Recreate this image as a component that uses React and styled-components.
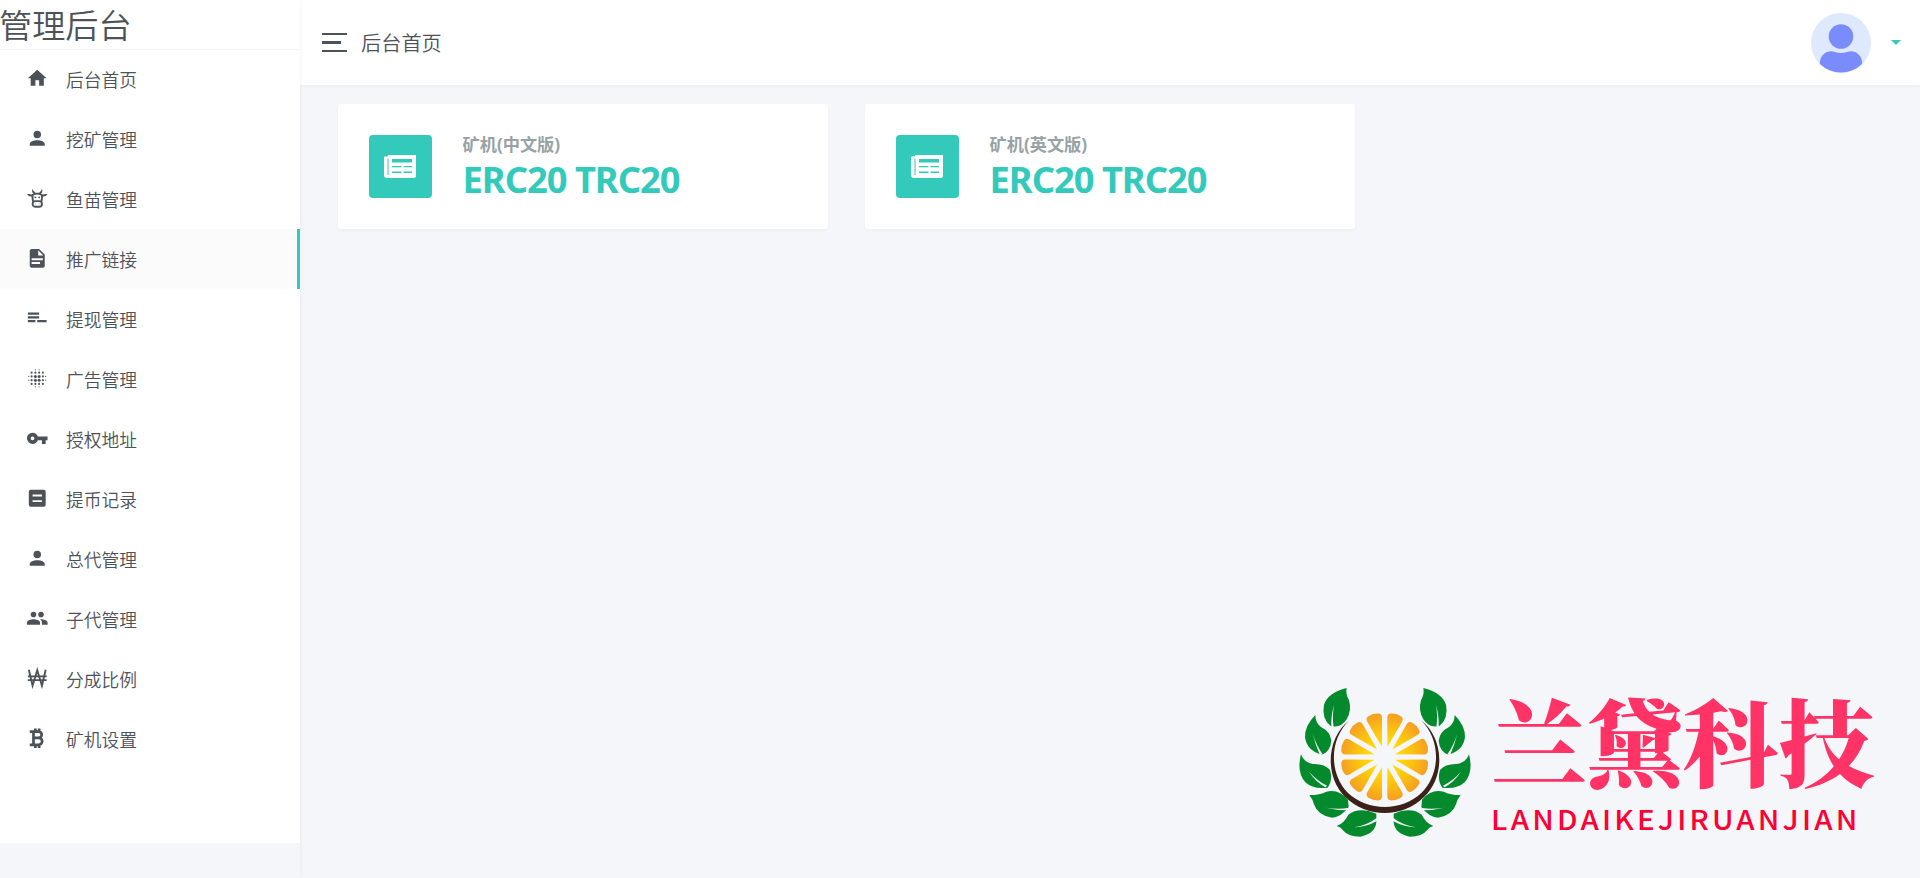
import React from 'react';
import styled, { createGlobalStyle } from 'styled-components';

const Global = createGlobalStyle`
  * { box-sizing: border-box; }
  body { margin: 0; background: #f4f6fa; color: #4d5259; overflow: hidden;
    font-family: "Noto Sans", "Noto Sans CJK SC", sans-serif; font-weight: 300; }
`;
const Shell = styled.div`display: flex; height: 878px;`;
const Sidebar = styled.aside`width: 300px; flex: none; box-shadow: 0 0 5px rgba(0,0,0,.06); z-index: 2;`;
const SideBody = styled.div`height: 843px; background: #fff;`;
const Brand = styled.div`
  height: 50px; margin-bottom: -1px; border-bottom: 1px solid #f5f5f5; white-space: nowrap;
  font: 350 33.2px/48px "Noto Sans CJK SC", sans-serif; margin-left: -1px;
`;
const Nav = styled.nav`display: flex; flex-direction: column;`;
const NavItem = styled.a`
  height: 60px; padding-left: 26px; display: flex; align-items: center; gap: 17.5px; flex: none;
  background: ${p => (p.$active ? '#fbfbfb' : 'transparent')};
  border-right: 3px solid ${p => (p.$active ? '#33cabb' : 'transparent')};
`;
const NavIcon = styled.svg`width: 22.5px; height: 22.5px; fill: currentColor; flex: none; margin-top: -1px;`;
const NavLabel = styled.span`font: 350 17.75px/26px "Noto Sans CJK SC", sans-serif;`;
const Main = styled.main`flex: 1; display: flex; flex-direction: column;`;
const Topbar = styled.header`
  height: 85px; background: #fff; box-shadow: 0 1px 3px rgba(0,0,0,.04);
  display: flex; align-items: center; padding: 0 19px 0 22px;
`;
const Burger = styled.div`
  width: 25px; height: 19px; display: flex; flex-direction: column; justify-content: space-between; margin-right: 14px;
`;
const Bar = styled.span`height: ${p => (p.$short ? 3 : 2)}px; width: ${p => (p.$short ? 19 : 25)}px; background: #4d5259;`;
const PageTitle = styled.div`flex: 1; font: 350 20.2px/30px "Noto Sans CJK SC", sans-serif;`;
const Avatar = styled.svg`width: 60px; height: 60px; margin-right: 20px;`;
const Caret = styled.span`border: 5px solid transparent; border-top-color: #33cabb; border-bottom: 0;`;
const Content = styled.div`flex: 1; display: flex; flex-direction: column; justify-content: space-between; padding: 19px 44px 39px 38px;`;
const Cards = styled.div`display: flex; gap: 37px;`;
const Card = styled.section`
  width: 490px; height: 125px; background: #fff; border-radius: 3px; box-shadow: 0 1px 3px rgba(0,0,0,.04);
  display: flex; padding: 31px; gap: 31px;
`;
const Tile = styled.div`
  width: 62.5px; height: 63px; border-radius: 4px; background: #33cabb; display: flex; align-items: center; justify-content: center;
`;
const TileIcon = styled.svg`width: 32px; height: 23px;`;
const CardText = styled.div`display: flex; flex-direction: column;`;
const CardLabel = styled.div`font: 700 17.2px/20px "Noto Sans", "Noto Sans CJK SC", sans-serif; color: #96a2a5;`;
const CardValue = styled.div`font: 700 36.3px/48px "Noto Sans", sans-serif; color: #33cabb; letter-spacing: -1px; white-space: nowrap;`;
const Brandmark = styled.div`display: flex; align-self: flex-end; width: 577px; height: 152px;`;
const Emblem = styled.svg`width: 172px; height: 152px; flex: none;`;
const BrandText = styled.div`padding-left: 20px; white-space: nowrap;`;
const BrandName = styled.div`
  height: 115px; font: 900 95.8px/104px "Noto Serif CJK SC", "Noto Sans CJK SC", serif; color: #ff3366;
`;
const BrandLatin = styled.div`
  font: 500 27.5px/32px "Noto Sans CJK SC", sans-serif; color: #ff0033; letter-spacing: 3px;
  transform: scaleX(1.07); transform-origin: left;
`;

const icons = {
  home: <path d="M10,20V14H14V20H19V12H22L12,3L2,12H5V20H10Z" />,
  account: <path d="M12,4A4,4 0 0,1 16,8A4,4 0 0,1 12,12A4,4 0 0,1 8,8A4,4 0 0,1 12,4M12,14C16.42,14 20,15.79 20,18V20H4V18C4,15.79 7.58,14 12,14Z" />,
  cow: <path fillRule="evenodd" d="M10.5 18A.5.5 0 1 1 10 17.5A.5.5 0 0 1 10.5 18M14 17.5A.5.5 0 1 0 14.5 18A.5.5 0 0 0 14 17.5M10 12A1 1 0 1 0 10 10A1 1 0 0 0 10 12M14 12A1 1 0 1 0 14 10A1 1 0 0 0 14 12M18 18A4 4 0 0 1 14 22H10A4 4 0 0 1 6.65 15.83Q6 14 6 11V10.5Q2.7 10.5 1 7.5Q3.8 7 6 8Q7 7 8 6.8Q5.6 5.5 7 2Q8 5 10 6H14Q16 5 17 2Q18.4 5.5 16 6.8Q17 7 18 8Q20.2 7 23 7.5Q21.3 10.5 18 10.5V11Q18 14 17.35 15.83A4 4 0 0 1 18 18M16 9Q12 7 8 9V11Q8 13 8.5 14.3A4 4 0 0 1 10 14H14A4 4 0 0 1 15.5 14.3Q16 13 16 11ZM14 16H10A2 2 0 1 0 10 20H14A2 2 0 1 0 14 16Z" />,
  file: <path d="M13,9H18.5L13,3.5V9M6,2H14L20,8V20A2,2 0 0,1 18,22H6C4.89,22 4,21.1 4,20V4C4,2.89 4.89,2 6,2M15,18V16H6V18H15M18,14V12H6V14H18Z" />,
  list: <path d="M2,16.200H10V13.800H2M12,13.800V16.200H22V13.800M14,5.800H2V8.200H14M14,9.800H2V12.200H14" />,
  blur: [[3, [10, 14]], [6, [6, 10, 14, 18]], [10, [3, 6, 10, 14, 18, 21]], [14, [3, 6, 10, 14, 18, 21]], [18, [6, 10, 14, 18]], [21, [10, 14]]].map(([y, xs]) =>
    xs.map(x => <circle key={`${x}-${y}`} cx={x} cy={y} r={x % 21 === 0 || y % 21 === 0 || x === 3 || y === 3 ? 0.6 : (x === 10 || x === 14) && (y === 10 || y === 14) ? 1.6 : 1.1} />)),
  key: <path d="M7,14A2,2 0 0,1 5,12A2,2 0 0,1 7,10A2,2 0 0,1 9,12A2,2 0 0,1 7,14M12.65,10C11.83,7.67 9.61,6 7,6A6,6 0 0,0 1,12A6,6 0 0,0 7,18C9.61,18 11.83,16.33 12.65,14H17V18H21V14H23V10H12.65Z" />,
  equal: <path fillRule="evenodd" d="M5,3H19A2,2 0 0,1 21,5V19A2,2 0 0,1 19,21H5A2,2 0 0,1 3,19V5A2,2 0 0,1 5,3M17,16V14H7V16H17M17,10V8H7V10H17Z" />,
  group: <path d="M16,13C15.71,13 15.38,13 15.03,13.05C16.19,13.89 17,15 17,16.5V19H23V16.5C23,14.17 18.33,13 16,13M8,13C5.67,13 1,14.17 1,16.5V19H15V16.5C15,14.17 10.33,13 8,13M8,11A3,3 0 0,0 11,8A3,3 0 0,0 8,5A3,3 0 0,0 5,8A3,3 0 0,0 8,11M16,11A3,3 0 0,0 19,8A3,3 0 0,0 16,5A3,3 0 0,0 13,8A3,3 0 0,0 16,11Z" />,
  won: <path fill="none" stroke="currentColor" strokeWidth="2" d="M3 3L7 20L12 3.500L17 20L21 3M2 10H22M2 14H22" />,
  bitcoin: <path fill="none" stroke="currentColor" strokeWidth="2.900" d="M4 5H13.500A3.200 3.200 0 0 1 13.500 11.500H8.500M13.500 11.500A3.700 3.700 0 0 1 13.500 19H4M8 5V19M10 1.500V5M14 1.500V5M10 19V22.500M14 19V22.500" />,
};

const items = [
  ['home', '后台首页'], ['account', '挖矿管理'], ['cow', '鱼苗管理'], ['file', '推广链接'],
  ['list', '提现管理'], ['blur', '广告管理'], ['key', '授权地址'], ['equal', '提币记录'],
  ['account', '总代管理'], ['group', '子代管理'], ['won', '分成比例'], ['bitcoin', '矿机设置'],
];

function Leaf({ d, vein }) {
  return <g><path d={d} fill="#048a2c" /><path d={vein} fill="#f4f6fa" /></g>;
}

/* Left half of the wreath; the right half is its mirror image. */
const leaves = [
  ['M199 54Q143 68 131 104Q123 146 151 168Q181 176 199 148Q215 120 206 91Q195 72 199 54Z', 'M161 105Q151 140 153 171L160 172Q155 140 161 105Z'],
  ['M105 135Q73 167 74 202Q79 242 124 254Q150 245 153 212Q150 185 122 171Q105 158 105 135Z', 'M97 192Q106 227 119 256L127 253Q109 228 97 192Z'],
  ['M62 253Q48 306 75 337Q99 359 142 353Q158 331 149 300Q134 281 98 282Q70 277 62 253Z', 'M86 305Q105 334 135 352L140 347Q110 332 86 305Z'],
  ['M87 375Q119 375 138 365Q176 356 203 389L205 411Q183 441 155 443Q112 437 101 403Q98 389 87 375Z', 'M136 413Q174 419 203 414L203 421Q169 421 136 413Z'],
  ['M169 468Q193 458 204 434Q236 409 288 431V457Q285 491 240 500Q202 500 188 481Q181 471 169 468Z', 'M221 472Q262 465 290 443L290 453Q260 470 221 472Z'],
];

function Wreath() {
  const half = leaves.map(([d, v], i) => <Leaf key={i} d={d} vein={v} />);
  return (
    <Emblem viewBox="56 51 516 456">
      <defs>
        <radialGradient id="fruit" gradientUnits="userSpaceOnUse" cx="313" cy="261" r="138">
          <stop offset=".15" stopColor="#ffe600" /><stop offset=".55" stopColor="#fdc70c" /><stop offset="1" stopColor="#f39a25" />
        </radialGradient>
      </defs>
      {half}
      <g transform="translate(628 0) scale(-1 1)">{half}</g>
      <path fill="#3a2218" d="M207 151C139 202 131 319 195 381C259 445 367 445 431 381C497 319 490 202 422 151C481 208 483 309 423 369C364 425 263 425 203 369C145 309 147 208 207 151Z" />
      {Array.from({ length: 12 }, (_, i) => (
        <path key={i} fill="url(#fruit)" transform={`rotate(${i * 30 + 15} 313 261)`} d="M313 229L290 145Q287 133 299 130Q313 126 327 130Q339 133 336 145Z" />
      ))}
    </Emblem>
  );
}

function Newspaper() {
  return (
    <TileIcon viewBox="0 0 32 23">
      <path fill="#fff" d="M4 0H32V20.500Q32 23 29.500 23H3Q0 23 0 20V2.500Q0 1.500 1 1.500H4Z" />
      <path fill="#33cabb" d="M8 4H28V7.500H8ZM8 11H17.500V12.300H8ZM19.500 11H28V12.300H19.500ZM8 16.500H17.500V18H8ZM19.500 16.500H28V18H19.500ZM3.500 3.500H4.500V20H3.500Z" />
    </TileIcon>
  );
}

export default function App() {
  return (
    <Shell>
      <Global />
      <Sidebar>
        <SideBody>
          <Brand>管理后台</Brand>
          <Nav>
            {items.map(([icon, label], i) => (
              <NavItem key={label} $active={i === 3}>
                <NavIcon viewBox="0 0 24 24">{icons[icon]}</NavIcon>
                <NavLabel>{label}</NavLabel>
              </NavItem>
            ))}
          </Nav>
        </SideBody>
      </Sidebar>
      <Main>
        <Topbar>
          <Burger><Bar /><Bar $short /><Bar /></Burger>
          <PageTitle>后台首页</PageTitle>
          <Avatar viewBox="0 0 60 60">
            <circle cx="30" cy="30" r="30" fill="#dfe9fd" />
            <circle cx="30" cy="23.500" r="12.300" fill="#7a8cfb" />
            <path fill="#7a8cfb" d="M9 51C8 42 17 36 24 39Q30 41 36 39C43 36 52 42 51 51A30 30 0 0 1 9 51Z" />
          </Avatar>
          <Caret />
        </Topbar>
        <Content>
          <Cards>
            {['矿机(中文版)', '矿机(英文版)'].map(label => (
              <Card key={label}>
                <Tile><Newspaper /></Tile>
                <CardText><CardLabel>{label}</CardLabel><CardValue>ERC20 TRC20</CardValue></CardText>
              </Card>
            ))}
          </Cards>
          <Brandmark>
            <Wreath />
            <BrandText><BrandName>兰黛科技</BrandName><BrandLatin>LANDAIKEJIRUANJIAN</BrandLatin></BrandText>
          </Brandmark>
        </Content>
      </Main>
    </Shell>
  );
}
